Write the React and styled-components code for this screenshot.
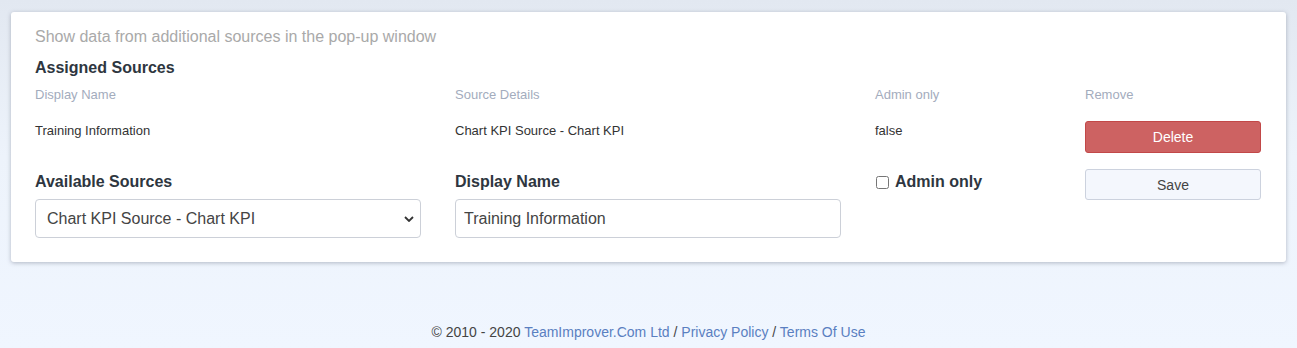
import React from 'react';
import styled, { createGlobalStyle } from 'styled-components';

const Global = createGlobalStyle`
  html, body {
    margin: 0;
    padding: 0;
  }
  body {
    font-family: "Liberation Sans", Arial, sans-serif;
    background: linear-gradient(180deg, #e2e8f1 0%, #edf3fb 45%, #f0f6ff 100%);
    min-height: 348px;
  }
`;

const Page = styled.div`
  padding: 12px 11px 0 11px;
`;

const Card = styled.div`
  background: #fff;
  border-radius: 3px;
  box-shadow: 0 1px 4px rgba(60, 70, 90, 0.35);
  padding: 16px 24px 24px 24px;
  height: 250px;
  box-sizing: border-box;
`;

const Intro = styled.div`
  font-size: 16px;
  color: #a9a9a9;
  line-height: 18px;
`;

const Heading = styled.div`
  font-size: 16px;
  font-weight: bold;
  color: #2e3640;
  margin-top: 13px;
  line-height: 18px;
`;

const Grid = styled.div`
  display: grid;
  grid-template-columns: 386px 386px 176px 176px;
  column-gap: 34px;
`;

const HeadCell = styled.div`
  font-size: 13px;
  color: #a3acbd;
  padding-top: 10px;
  line-height: 15px;
`;

const Cell = styled.div`
  font-size: 13px;
  color: #333;
  padding-top: 21px;
  line-height: 15px;
`;

const BtnCell = styled.div`
  padding-top: 19px;
`;

const Button = styled.button`
  display: block;
  width: 100%;
  font-family: inherit;
  font-size: 14px;
  border-radius: 3px;
  cursor: pointer;
  height: ${p => (p.danger ? '32px' : '31px')};
  background: ${p => (p.danger ? '#cd6262' : '#f4f7fd')};
  border: 1px solid ${p => (p.danger ? '#c24848' : '#ccd2de')};
  color: ${p => (p.danger ? '#fff' : '#444')};
`;

const FormRow = styled(Grid)`
  margin-top: 16px;
`;

const Field = styled.div`
  display: flex;
  flex-direction: column;
  gap: 8px;
`;

const Label = styled.label`
  font-size: 16px;
  font-weight: bold;
  color: #2e3640;
  line-height: 18px;
  display: flex;
  align-items: center;
  gap: 6px;
  padding-top: 4px;
`;

const Check = styled.input`
  width: 13px;
  height: 13px;
  margin: 0 0 0 1px;
`;

const Select = styled.select`
  height: 39px;
  border: 1px solid #ccd0d8;
  border-radius: 4px;
  background: #fff;
  font-family: inherit;
  font-size: 16px;
  color: #444;
  padding: 0 11px;
  appearance: none;
  background-image: url("data:image/svg+xml,%3Csvg xmlns='http://www.w3.org/2000/svg' width='10' height='6' viewBox='0 0 10 6'%3E%3Cpath d='M1 1l4 4 4-4' fill='none' stroke='%23333' stroke-width='1.8'/%3E%3C/svg%3E");
  background-repeat: no-repeat;
  background-position: right 6px center;
`;

const Input = styled.input`
  height: 39px;
  box-sizing: border-box;
  border: 1px solid #ccd0d8;
  border-radius: 4px;
  font-family: inherit;
  font-size: 16px;
  color: #444;
  padding: 0 8px;
`;

const Footer = styled.div`
  text-align: center;
  font-size: 14px;
  color: #444;
  margin-top: 62px;
  a {
    color: #5a7fc1;
    text-decoration: none;
  }
`;

export default function App() {
  return (
    <>
      <Global />
      <Page>
        <Card>
          <Intro>Show data from additional sources in the pop-up window</Intro>
          <Heading>Assigned Sources</Heading>
          <Grid>
            <HeadCell>Display Name</HeadCell>
            <HeadCell>Source Details</HeadCell>
            <HeadCell>Admin only</HeadCell>
            <HeadCell>Remove</HeadCell>
            <Cell>Training Information</Cell>
            <Cell>Chart KPI Source - Chart KPI</Cell>
            <Cell>false</Cell>
            <BtnCell>
              <Button danger>Delete</Button>
            </BtnCell>
          </Grid>
          <FormRow>
            <Field>
              <Label>Available Sources</Label>
              <Select defaultValue="kpi">
                <option value="kpi">Chart KPI Source - Chart KPI</option>
              </Select>
            </Field>
            <Field>
              <Label>Display Name</Label>
              <Input defaultValue="Training Information" />
            </Field>
            <Field>
              <Label>
                <Check type="checkbox" />
                Admin only
              </Label>
            </Field>
            <div>
              <Button>Save</Button>
            </div>
          </FormRow>
        </Card>
        <Footer>
          © 2010 - 2020 <a href="#">TeamImprover.Com Ltd</a> / <a href="#">Privacy Policy</a> /{' '}
          <a href="#">Terms Of Use</a>
        </Footer>
      </Page>
    </>
  );
}
